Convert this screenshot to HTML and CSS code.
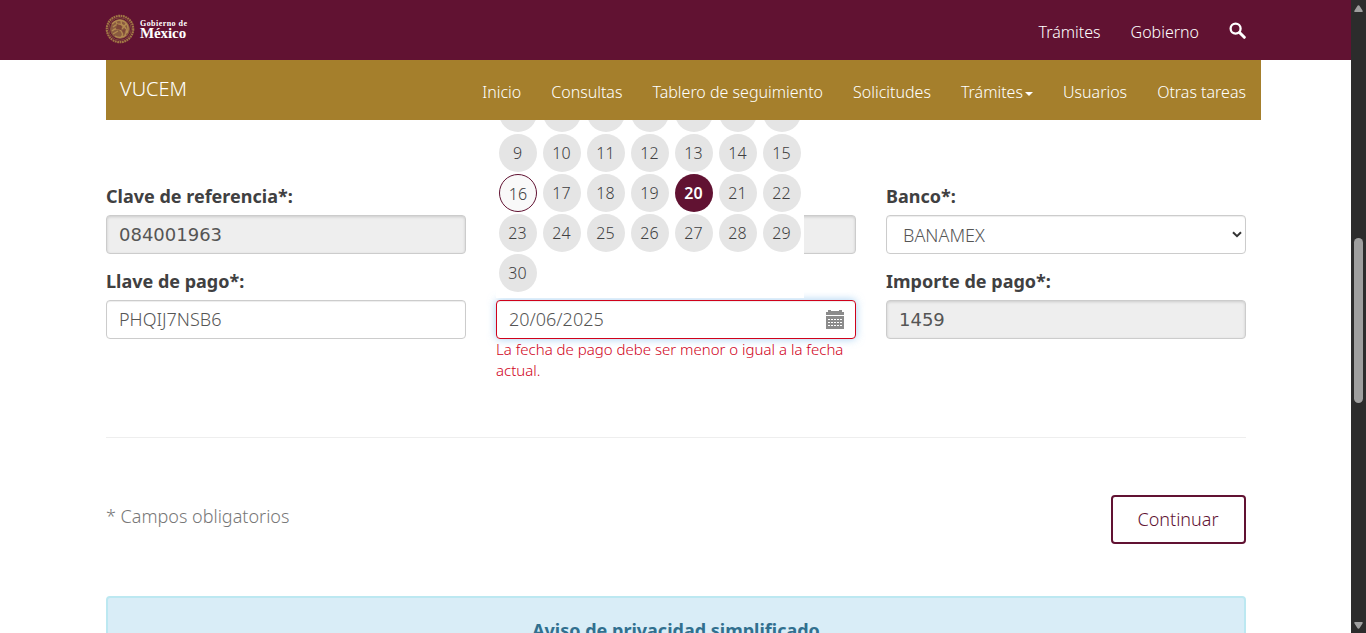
FILE: index.html
```html
<!DOCTYPE html>
<html lang="es">
<head>
<meta charset="utf-8">
<title>VUCEM</title>
<link rel="stylesheet" href="styles.css">
</head>
<body>
<div class="viewport">
  <div class="page">
    <header class="gov-bar">
      <div class="logo">
        <svg class="seal" viewBox="0 0 30 30" width="30" height="30">
          <circle cx="15" cy="15" r="13.2" fill="none" stroke="#a17845" stroke-width="2.2" stroke-dasharray="1.8 .6"/>
          <circle cx="15" cy="15" r="11.3" fill="none" stroke="#8e6541" stroke-width=".7"/>
          <circle cx="15" cy="15" r="10" fill="#8a5b40"/>
          <path d="M7 10c3-4 9-5 13-2 3 3 4 7 2 11M8 13c3-3 8-4 11-1s3 6 1 9M7 17c3-3 7-3 9 0s2 4 0 6M11 8l3 5M16 7l1 6M21 10l-4 5M8 20l5-3M10 22c3 2 8 2 11-1" fill="none" stroke="#b38b50" stroke-width="1.3"/>
          <path d="M12 10l5 2-1 4-5-1zM17 16l4-1-2 5z" fill="#7d4638"/>
        </svg>
        <div class="logo-text"><span class="logo-small">Gobierno de</span><span class="logo-big">México</span></div>
      </div>
      <nav class="gov-links">
        <a>Trámites</a><a>Gobierno</a>
        <svg class="search" viewBox="0 0 17 17" width="17" height="17"><circle cx="6.6" cy="6.6" r="5" fill="none" stroke="#fff" stroke-width="2.3"/><path d="M10.5 10.5l4.8 4.8" stroke="#fff" stroke-width="3" stroke-linecap="round"/></svg>
      </nav>
    </header>
    <div class="subnav">
      <span class="brand">VUCEM</span>
      <nav class="links"><a>Inicio</a><a>Consultas</a><a>Tablero de seguimiento</a><a>Solicitudes</a><a>Trámites<i class="caret"></i></a><a>Usuarios</a><a>Otras tareas</a></nav>
    </div>
    <main class="content">
      <form class="fields">
        <div class="field"><label>Clave de referencia*:</label><div class="control disabled">084001963</div></div>
        <div class="field"><label></label><div class="control disabled"></div></div>
        <div class="field"><label>Banco*:</label><div class="control select">BANAMEX<svg class="chevron" viewBox="0 0 10 7" width="10" height="7"><path d="M1 1.2l4 4 4-4" fill="none" stroke="#333" stroke-width="2"/></svg></div></div>
        <div class="field"><label>Llave de pago*:</label><div class="control">PHQIJ7NSB6</div></div>
        <div class="field date-field">
          <label></label>
          <div class="control invalid">20/06/2025
            <svg class="calendar-icon" viewBox="0 0 18 19" width="18" height="19">
              <path d="M0 2h2V0h3v1h8V0h3v2h2v3H0zM0 6h18v13H0z" fill="#8b8b8b"/>
              <path d="M2 9.500h15M2 12.500h15M2 15.500h15" stroke="#fff" stroke-width="1" stroke-dasharray="2 1"/>
            </svg>
          </div>
          <p class="error">La fecha de pago debe ser menor o igual a la fecha actual.</p>
          <div class="datepicker">
            <i></i><i></i><i></i><i></i><i></i><i></i><i></i>
            <i>9</i><i>10</i><i>11</i><i>12</i><i>13</i><i>14</i><i>15</i>
            <i class="today">16</i><i>17</i><i>18</i><i>19</i><i class="selected">20</i><i>21</i><i>22</i>
            <i>23</i><i>24</i><i>25</i><i>26</i><i>27</i><i>28</i><i>29</i>
            <i>30</i>
          </div>
        </div>
        <div class="field"><label>Importe de pago*:</label><div class="control disabled">1459</div></div>
      </form>
      <div class="actions"><span class="required">* Campos obligatorios</span><button class="continue" type="button">Continuar</button></div>
      <div class="notice">Aviso de privacidad simplificado</div>
    </main>
  </div>
  <aside class="scrollbar">
    <svg viewBox="0 0 15 16" width="15" height="16"><path d="M7.500 5.200c.5 0 1 .4 1.300 1l2.700 4.200c.5 1 .2 1.600-.8 1.600H4.300c-1 0-1.300-.6-.8-1.600L6.200 6.200c.3-.6.8-1 1.300-1z" fill="#9f9f9f"/></svg>
    <div class="thumb"></div>
    <svg class="down" viewBox="0 0 15 16" width="15" height="16"><path d="M7.500 11.800c.5 0 1-.4 1.300-1l2.700-4.200c.5-1 .2-1.600-.8-1.600H4.300c-1 0-1.300.6-.8 1.600l2.700 4.200c.3.6.8 1 1.300 1z" fill="#9f9f9f"/></svg>
  </aside>
</div>
</body>
</html>
```

FILE: styles.css
```css
* { box-sizing: border-box; }
body { margin: 0; background: #fff; font-family: "Noto Sans", sans-serif; font-size: 18px; font-weight: 300; color: #404041; overflow: hidden; }
.viewport { display: flex; height: 633px; overflow: hidden; }
.page { flex: 1; min-width: 0; overflow: hidden; }
.gov-bar { height: 60px; padding: 0 105px 0 105px; background: #611232; display: flex; justify-content: space-between; color: #fff; }
.logo { display: flex; padding-top: 14px; gap: 5px; }
.logo-text { display: flex; flex-direction: column; padding-top: 5px; font-family: "Liberation Serif", serif; }
.logo-small { font-size: 8px; line-height: 9px; letter-spacing: .45px; font-weight: 700; }
.logo-big { font-size: 15px; line-height: 11px; font-weight: 700; letter-spacing: -.1px; }
.gov-links { display: flex; gap: 30px; font-size: 16px; line-height: 24px; padding-top: 20px; font-weight: 300; }
.search { margin-top: 2px; }
.subnav { position: relative; z-index: 3; width: 1155px; height: 60px; margin-left: 106px; padding: 0 15px 0 14px; background: #a57f2c; color: #fff; display: flex; justify-content: space-between; }
.brand { font-size: 20px; line-height: 24px; padding-top: 17px; }
.links { display: flex; gap: 30px; font-size: 16px; line-height: 24px; padding-top: 20px; white-space: nowrap; }
.caret { display: inline-block; border: 4px solid transparent; border-top-color: #fff; border-bottom: 0; margin-left: 2px; vertical-align: middle; }
.content { width: 1140px; margin-left: 106px; padding-top: 64px; }
.fields { display: grid; grid-template-columns: repeat(3, 360px); grid-template-rows: 85px 168px; column-gap: 30px; border-bottom: 1px solid #eee; }
.field { position: relative; }
label { display: block; height: 31px; line-height: 24px; font-weight: 700; white-space: nowrap; }
.control { height: 39px; padding: 0 12px; border: 1px solid #ccc; border-radius: 4px; background: #fff; box-shadow: inset 0 1px 1px rgba(0,0,0,.075); font-size: 18px; line-height: 39px; color: #555; display: flex; justify-content: space-between; align-items: center; }
.disabled { background: #eee; font-family: "DejaVu Sans", sans-serif; font-weight: 400; box-shadow: inset 0 1px 3px rgba(0,0,0,.15); }
.select { padding: 1px 3px 0 16px; }
.chevron { margin-bottom: 1px; }
.invalid { border-color: #d0021b; box-shadow: inset 0 1px 1px rgba(0,0,0,.075), 0 0 8px rgba(102,175,233,.6); padding-right: 11px; }
.calendar-icon { margin-bottom: 1px; }
.error { margin: 0; color: #d0021b; font-size: 15px; line-height: 21px; }
.datepicker { position: absolute; left: 0; top: -176px; width: 308px; height: 205px; padding: 1px 3px 0; background: #fff; display: grid; grid-template-columns: repeat(7, 38px); grid-auto-rows: 38px; gap: 2px 6px; z-index: 2; }
.datepicker i { border-radius: 50%; background: #e5e5e5; font-style: normal; font-size: 16px; line-height: 38px; text-align: center; padding-right: 1px; }
.datepicker .today { background: #f9f9f9; border: 1px solid #611232; padding: 0; }
.datepicker .selected { background: #611232; color: #fff; font-weight: 600; }
.actions { height: 158px; padding-top: 57px; display: flex; justify-content: space-between; align-items: flex-start; }
.required { line-height: 26px; padding-top: 8px; color: #777; }
.continue { width: 135px; height: 49px; padding: 0 1px 2px 0; border: 2px solid #611232; border-radius: 4px; background: #fff; color: #611232; font: 300 18px "Noto Sans", sans-serif; }
.notice { height: 100px; border: 2px solid #bce8f1; border-radius: 4px; background: #d9edf7; color: #31708f; text-align: center; font-weight: 700; line-height: 26px; padding-top: 19px; }
.scrollbar { width: 15px; background: #2c2c2c; display: flex; flex-direction: column; align-items: center; }
.thumb { width: 9px; height: 165px; margin-top: 222px; border-radius: 5px; background: #9f9f9f; }
.down { margin-top: auto; }
```
